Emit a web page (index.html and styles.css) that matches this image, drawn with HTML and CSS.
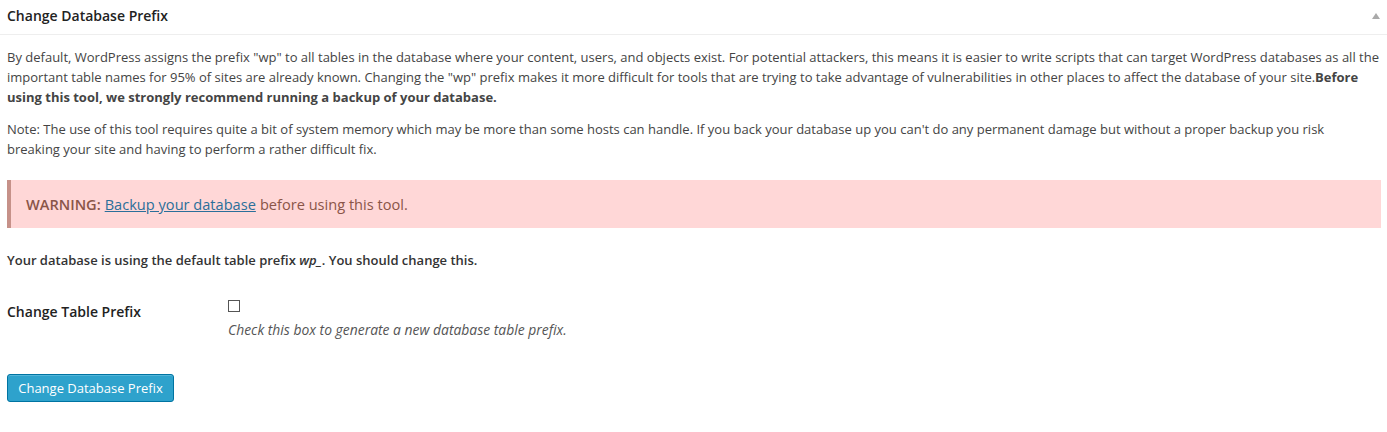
FILE: index.html
```html
<!DOCTYPE html>
<html>
<head>
<meta charset="utf-8">
<link rel="stylesheet" href="styles.css">
</head>
<body>
<div class="postbox">
  <div class="hndle">
    <h3 class="title">Change Database Prefix</h3>
    <span class="toggle"></span>
  </div>
  <div class="inside">
    <p class="intro">By default, WordPress assigns the prefix "wp" to all tables in the database where your content, users, and objects exist. For potential attackers, this means it is easier to write scripts that can target WordPress databases as all the important table names for 95% of sites are already known. Changing the "wp" prefix makes it more difficult for tools that are trying to take advantage of vulnerabilities in other places to affect the database of your site.<strong>Before using this tool, we strongly recommend running a backup of your database.</strong></p>
    <p class="note">Note: The use of this tool requires quite a bit of system memory which may be more than some hosts can handle. If you back your database up you can't do any permanent damage but without a proper backup you risk breaking your site and having to perform a rather difficult fix.</p>
    <div class="warning"><strong>WARNING:</strong> <a href="#">Backup your database</a> before using this tool.</div>
    <p class="status">Your database is using the default table prefix <em>wp_</em>. You should change this.</p>
    <div class="form-row">
      <div class="label">Change Table Prefix</div>
      <div class="field">
        <span class="checkbox"></span>
        <p class="description">Check this box to generate a new database table prefix.</p>
      </div>
    </div>
    <div class="submit"><button class="button-primary">Change Database Prefix</button></div>
  </div>
</div>
</body>
</html>
```
FILE: styles.css
```css
html, body {
  margin: 0;
  padding: 0;
  background: #fff;
}
body {
  font-family: "Open Sans", "Liberation Sans", sans-serif;
  color: #444;
  font-size: 13px;
  line-height: 20px;
}
.hndle {
  height: 34px;
  border-bottom: 1px solid #eee;
  display: flex;
  align-items: center;
  justify-content: space-between;
  padding: 0 7px;
}
.title {
  margin: 0;
  font-size: 14px;
  font-weight: 600;
  color: #222;
  line-height: 20px;
  position: relative;
  top: -1px;
}
.toggle {
  width: 0;
  height: 0;
  border-left: 4px solid transparent;
  border-right: 4px solid transparent;
  border-bottom: 6px solid #aaa;
  position: relative;
  top: -1px;
}
.inside {
  padding: 0 8px 0 7px;
}
.intro {
  margin: 12px 0 0;
}
.note {
  margin: 12px 0 0;
}
.warning {
  margin: 21px -2px 0 0;
  height: 48px;
  box-sizing: border-box;
  background: #ffd7d7;
  border-left: 4px solid #c69189;
  padding: 0 0 0 15px;
  display: flex;
  align-items: center;
  font-size: 14.6px;
  color: #8a5548;
}
.warning strong {
  font-weight: 600;
  margin-right: 4px;
}
.warning a {
  color: #2b6f9a;
  text-decoration: underline;
  margin-right: 4px;
}
.status {
  margin: 22px 0 0;
  font-weight: 600;
  color: #333;
}
.form-row {
  display: flex;
  margin-top: 30px;
}
.label {
  width: 221px;
  font-size: 14px;
  font-weight: 600;
  color: #222;
  padding-top: 2px;
}
.field {
  display: flex;
  flex-direction: column;
}
.checkbox {
  display: block;
  width: 10px;
  height: 10px;
  border: 1px solid #555;
  background: #fff;
}
.description {
  margin: 8px 0 0;
  font-size: 13.9px;
  font-style: italic;
  color: #555;
}
.submit {
  margin-top: 34px;
}
.button-primary {
  font-family: "Open Sans", "Liberation Sans", sans-serif;
  font-size: 13px;
  height: 28px;
  line-height: 26px;
  padding: 0 10px;
  background: #2ea2cc;
  border: 1px solid #0074a2;
  border-radius: 3px;
  color: #fff;
  box-shadow: inset 0 1px 0 rgba(120,200,230,.5);
  width: 167px;
}
```
